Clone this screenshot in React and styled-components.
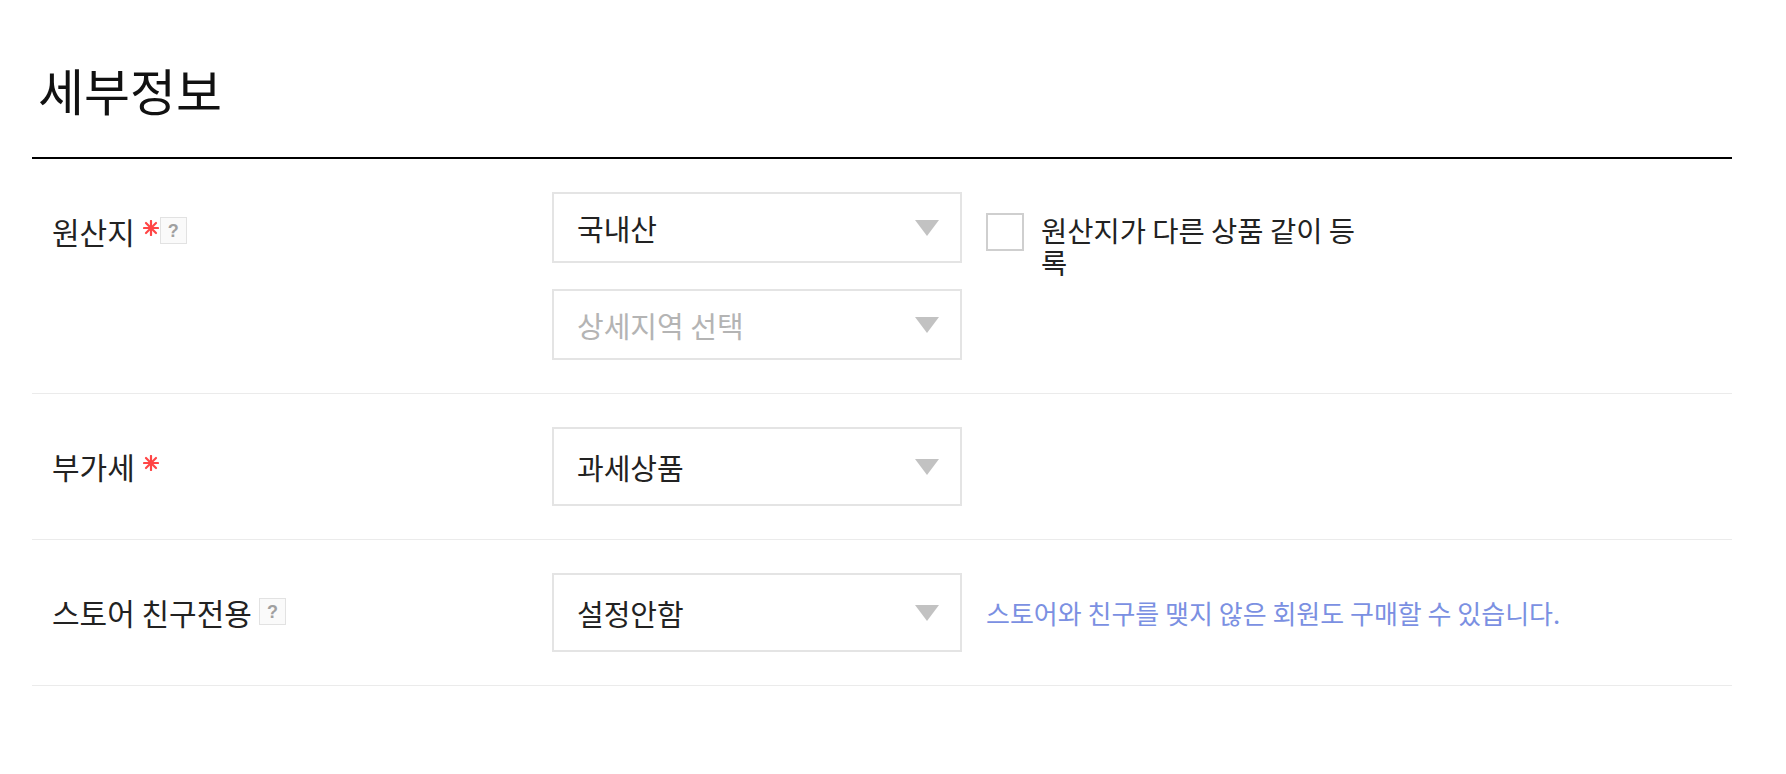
import React from "react";
import styled, { createGlobalStyle } from "styled-components";

const GlobalStyle = createGlobalStyle`
  body {
    margin: 0;
    background: #fff;
    font-family: "Noto Sans CJK KR", "Noto Sans", sans-serif;
    color: #222;
  }
`;

const ROWS = [
  {
    label: "원산지",
    required: true,
    help: true,
    selects: [
      { value: "국내산", h: 71 },
      { value: "상세지역 선택", h: 71, placeholder: true },
    ],
    extra: "checkbox",
  },
  {
    label: "부가세",
    required: true,
    selects: [{ value: "과세상품", h: 79 }],
  },
  {
    label: "스토어 친구전용",
    help: true,
    selects: [{ value: "설정안함", h: 79 }],
    extra: "note",
  },
];

// red required mark
const Star = () => (
  <StarIcon viewBox="0 0 16 16">
    <g stroke="#ff4545" strokeWidth="2.2" strokeLinecap="round">
      <line x1="8" y1="1" x2="8" y2="15" />
      <line x1="1" y1="8" x2="15" y2="8" />
      <line x1="3" y1="3" x2="13" y2="13" />
      <line x1="13" y1="3" x2="3" y2="13" />
    </g>
  </StarIcon>
);

const App = () => {
  return (
    <Page>
      <GlobalStyle />
      <Section>
        <Header>
          <Title>세부정보</Title>
        </Header>

        {ROWS.map((row) => (
          <Row key={row.label}>
            <LabelCell>
              <Label>{row.label}</Label>
              {row.required && <Star />}
              {row.help && <HelpBox $after={row.required}>?</HelpBox>}
            </LabelCell>

            <Field $center={row.extra === "note"}>
              <SelectStack>
                {row.selects.map((s) => (
                  <Select key={s.value} $h={s.h}>
                    <SelectText $placeholder={s.placeholder}>{s.value}</SelectText>
                    <Arrow />
                  </Select>
                ))}
              </SelectStack>

              {row.extra === "checkbox" && (
                <CheckRow>
                  <CheckBox />
                  <CheckText>원산지가 다른 상품 같이 등록</CheckText>
                </CheckRow>
              )}

              {row.extra === "note" && (
                <Note>스토어와 친구를 맺지 않은 회원도 구매할 수 있습니다.</Note>
              )}
            </Field>
          </Row>
        ))}
      </Section>
    </Page>
  );
};

const Page = styled.div`
  width: 100%;
  min-height: 774px;
  background: #fff;
`;

const Section = styled.div`
  width: 1700px;
  margin-left: 32px;
`;

const Header = styled.div`
  padding: 64px 0 43px 6px;
  border-bottom: 2px solid #000;
`;

const Title = styled.h2`
  margin: 0;
  font-size: 50px;
  line-height: 50px;
  font-weight: 400;
  color: #111;
`;

const Row = styled.div`
  display: flex;
  padding: 33px 0;
  border-bottom: 1px solid #ebebeb;
`;

const LabelCell = styled.div`
  width: 520px;
  flex-shrink: 0;
  display: flex;
  align-items: flex-start;
  padding: 21px 0 0 20px;
  box-sizing: border-box;
`;

const Label = styled.span`
  font-size: 30px;
  line-height: 36px;
  color: #222;
`;

const StarIcon = styled.svg`
  width: 16px;
  height: 16px;
  margin: 7px 0 0 8px;
  flex-shrink: 0;
`;

const HelpBox = styled.span`
  display: inline-flex;
  align-items: center;
  justify-content: center;
  width: 25px;
  height: 25px;
  margin-top: 4px;
  margin-left: ${(p) => (p.$after ? "1px" : "7px")};
  border: 1px solid #e2e2e2;
  background: #fafafa;
  color: #a0a0a0;
  font-size: 18px;
  font-weight: 700;
  font-family: "Liberation Sans", sans-serif;
  line-height: 1;
`;

const Field = styled.div`
  display: flex;
  align-items: ${(p) => (p.$center ? "center" : "flex-start")};
`;

const SelectStack = styled.div`
  display: flex;
  flex-direction: column;
  gap: 26px;
`;

const Select = styled.div`
  width: 410px;
  height: ${(p) => p.$h}px;
  box-sizing: border-box;
  border: 2px solid #e4e4e4;
  display: flex;
  align-items: center;
  justify-content: space-between;
  padding: 0 21px 0 23px;
  background: #fff;
`;

const SelectText = styled.span`
  font-size: 29px;
  color: ${(p) => (p.$placeholder ? "#b4b4b4" : "#222")};
`;

const Arrow = styled.span`
  width: 0;
  height: 0;
  border-left: 12px solid transparent;
  border-right: 12px solid transparent;
  border-top: 16px solid #c2c2c2;
`;

const CheckRow = styled.div`
  display: flex;
  align-items: flex-start;
  margin-left: 24px;
  gap: 17px;
`;

const CheckBox = styled.span`
  width: 38px;
  height: 38px;
  margin-top: 21px;
  box-sizing: border-box;
  border: 2px solid #cfcfcf;
  background: #fff;
  flex-shrink: 0;
`;

const CheckText = styled.span`
  width: 336px;
  margin-top: 22px;
  font-size: 28.5px;
  line-height: 32px;
  color: #222;
`;

const Note = styled.span`
  margin-left: 24px;
  font-size: 26px;
  color: #7b90e2;
`;

export default App;
